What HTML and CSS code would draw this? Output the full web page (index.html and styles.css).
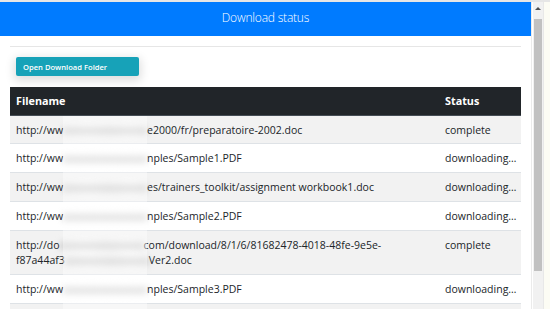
FILE: index.html
```html
<!DOCTYPE html>
<html lang="en">
<head>
<meta charset="UTF-8">
<title>Download status</title>
<link rel="stylesheet" href="styles.css">
</head>
<body>
<div class="window">
  <div class="page">
    <div class="topbar">Download status</div>
    <div class="content">
      <hr class="rule">
      <button class="folder-button" id="openFolder">Open Download Folder</button>
      <div class="table-wrap">
        <table class="downloads">
          <thead>
            <tr>
              <th class="col-file">Filename</th>
              <th class="col-status">Status</th>
            </tr>
          </thead>
          <tbody>
            <tr>
              <td>http://ww<span class="blur"></span>e2000/fr/preparatoire-2002.doc</td>
              <td>complete</td>
            </tr>
            <tr>
              <td>http://ww<span class="blur"></span>nples/Sample1.PDF</td>
              <td>downloading…</td>
            </tr>
            <tr>
              <td>http://ww<span class="blur"></span>es/trainers_toolkit/assignment workbook1.doc</td>
              <td>downloading…</td>
            </tr>
            <tr>
              <td>http://ww<span class="blur"></span>nples/Sample2.PDF</td>
              <td>downloading…</td>
            </tr>
            <tr>
              <td>http://do<span class="blur"></span>com/download/8/1/6/81682478-4018-48fe-9e5e-<br>f87a44af3<span class="blur"></span>Ver2.doc</td>
              <td>complete</td>
            </tr>
            <tr>
              <td>http://ww<span class="blur"></span>nples/Sample3.PDF</td>
              <td>downloading…</td>
            </tr>
            <tr>
              <td>&nbsp;</td>
              <td>&nbsp;</td>
            </tr>
          </tbody>
        </table>
        <!-- privacy smear over the host part of each url -->
        <div class="mask"></div>
      </div>
    </div>
  </div>
  <div class="scrollbar">
    <div class="scroll-arrow"></div>
    <div class="scroll-thumb"></div>
  </div>
  <div class="edge"></div>
</div>
</body>
</html>
```

FILE: styles.css
```css
*,
*:before,
*:after{
  box-sizing: border-box;
}
body{
  margin: 0;
  padding: 0;
  background-color: #ffffff;
  font-family: 'Open Sans', sans-serif;
  color: #212529;
  overflow: hidden;
}
.window {
  display: flex;
  height: 309px;
  border-top: 2px solid #e6e6e6;
}
.page {
  width: 532px;
  flex-shrink: 0;
  border-right: 1px solid #ebebeb;
  overflow: hidden;
}
.topbar {
  background-color: #007bff;
  color: #fff;
  height: 34px;
  line-height: 31px;
  text-align: center;
  font-size: 12px;
  font-weight: 300;
  letter-spacing: -0.2px;
}
.content {
  padding: 10px 10px 0 10px;
}
.rule {
  margin: 0;
  border: none;
  border-top: 1px solid #e6e6e6;
}
.folder-button {
  display: block;
  width: 123px;
  height: 19px;
  margin: 10px 0 0 6px;
  padding: 0 0 0 7px;
  text-align: left;
  background-color: #17a2b8;
  color: #fff;
  border: none;
  border-radius: 2px;
  font-family: 'Open Sans', sans-serif;
  font-size: 7.6px;
  font-weight: 600;
  box-shadow: 0 3px 10px 2px rgba(0, 0, 0, 0.13);
  cursor: pointer;
}
.table-wrap {
  position: relative;
  margin-top: 11px;
}
.downloads {
  width: 100%;
  border-collapse: collapse;
  table-layout: fixed;
  font-size: 10.5px;
  line-height: 15.7px;
}
.downloads th {
  background-color: #212529;
  color: #fff;
  font-weight: 700;
  font-size: 10.8px;
  text-align: left;
  padding: 6px;
  border-bottom: 1px solid #454d55;
}
.col-status {
  width: 82px;
}
.downloads td {
  padding: 7px 6px 5px 6px;
  border-top: 1px solid #dee2e6;
  vertical-align: top;
}
.downloads tbody tr:nth-child(odd) {
  background-color: #f2f2f2;
}
.downloads tbody tr:first-child td {
  border-top: none;
}
.blur {
  display: inline-block;
  width: 84px;
  height: 15.7px;
  vertical-align: top;
  background: linear-gradient(to bottom, transparent 20%, rgba(120, 120, 120, 0.34) 40%, rgba(120, 120, 120, 0.28) 70%, transparent 85%),
    linear-gradient(to right, transparent, rgba(255, 255, 255, 0.5) 30%, transparent 55%, rgba(255, 255, 255, 0.5) 80%, transparent);
  filter: blur(3px);
}
.mask {
  position: absolute;
  left: 53px;
  top: 29px;
  bottom: 0;
  width: 84px;
  background-color: rgba(255, 255, 255, 0.4);
}
.scrollbar {
  width: 11px;
  margin-left: 1px;
  flex-shrink: 0;
  background-color: #f1f1f1;
  border-right: 1px solid #e8e8e8;
}
.scroll-arrow {
  width: 0;
  height: 0;
  margin: 5px auto 0 auto;
  border-left: 3px solid transparent;
  border-right: 3px solid transparent;
  border-bottom: 3px solid #505050;
}
.scroll-thumb {
  margin: 9px 1px 0 1px;
  height: 252px;
  background-color: #c1c1c1;
}
.edge {
  flex: 1;
  background-color: #fcfcf4;
}
```
